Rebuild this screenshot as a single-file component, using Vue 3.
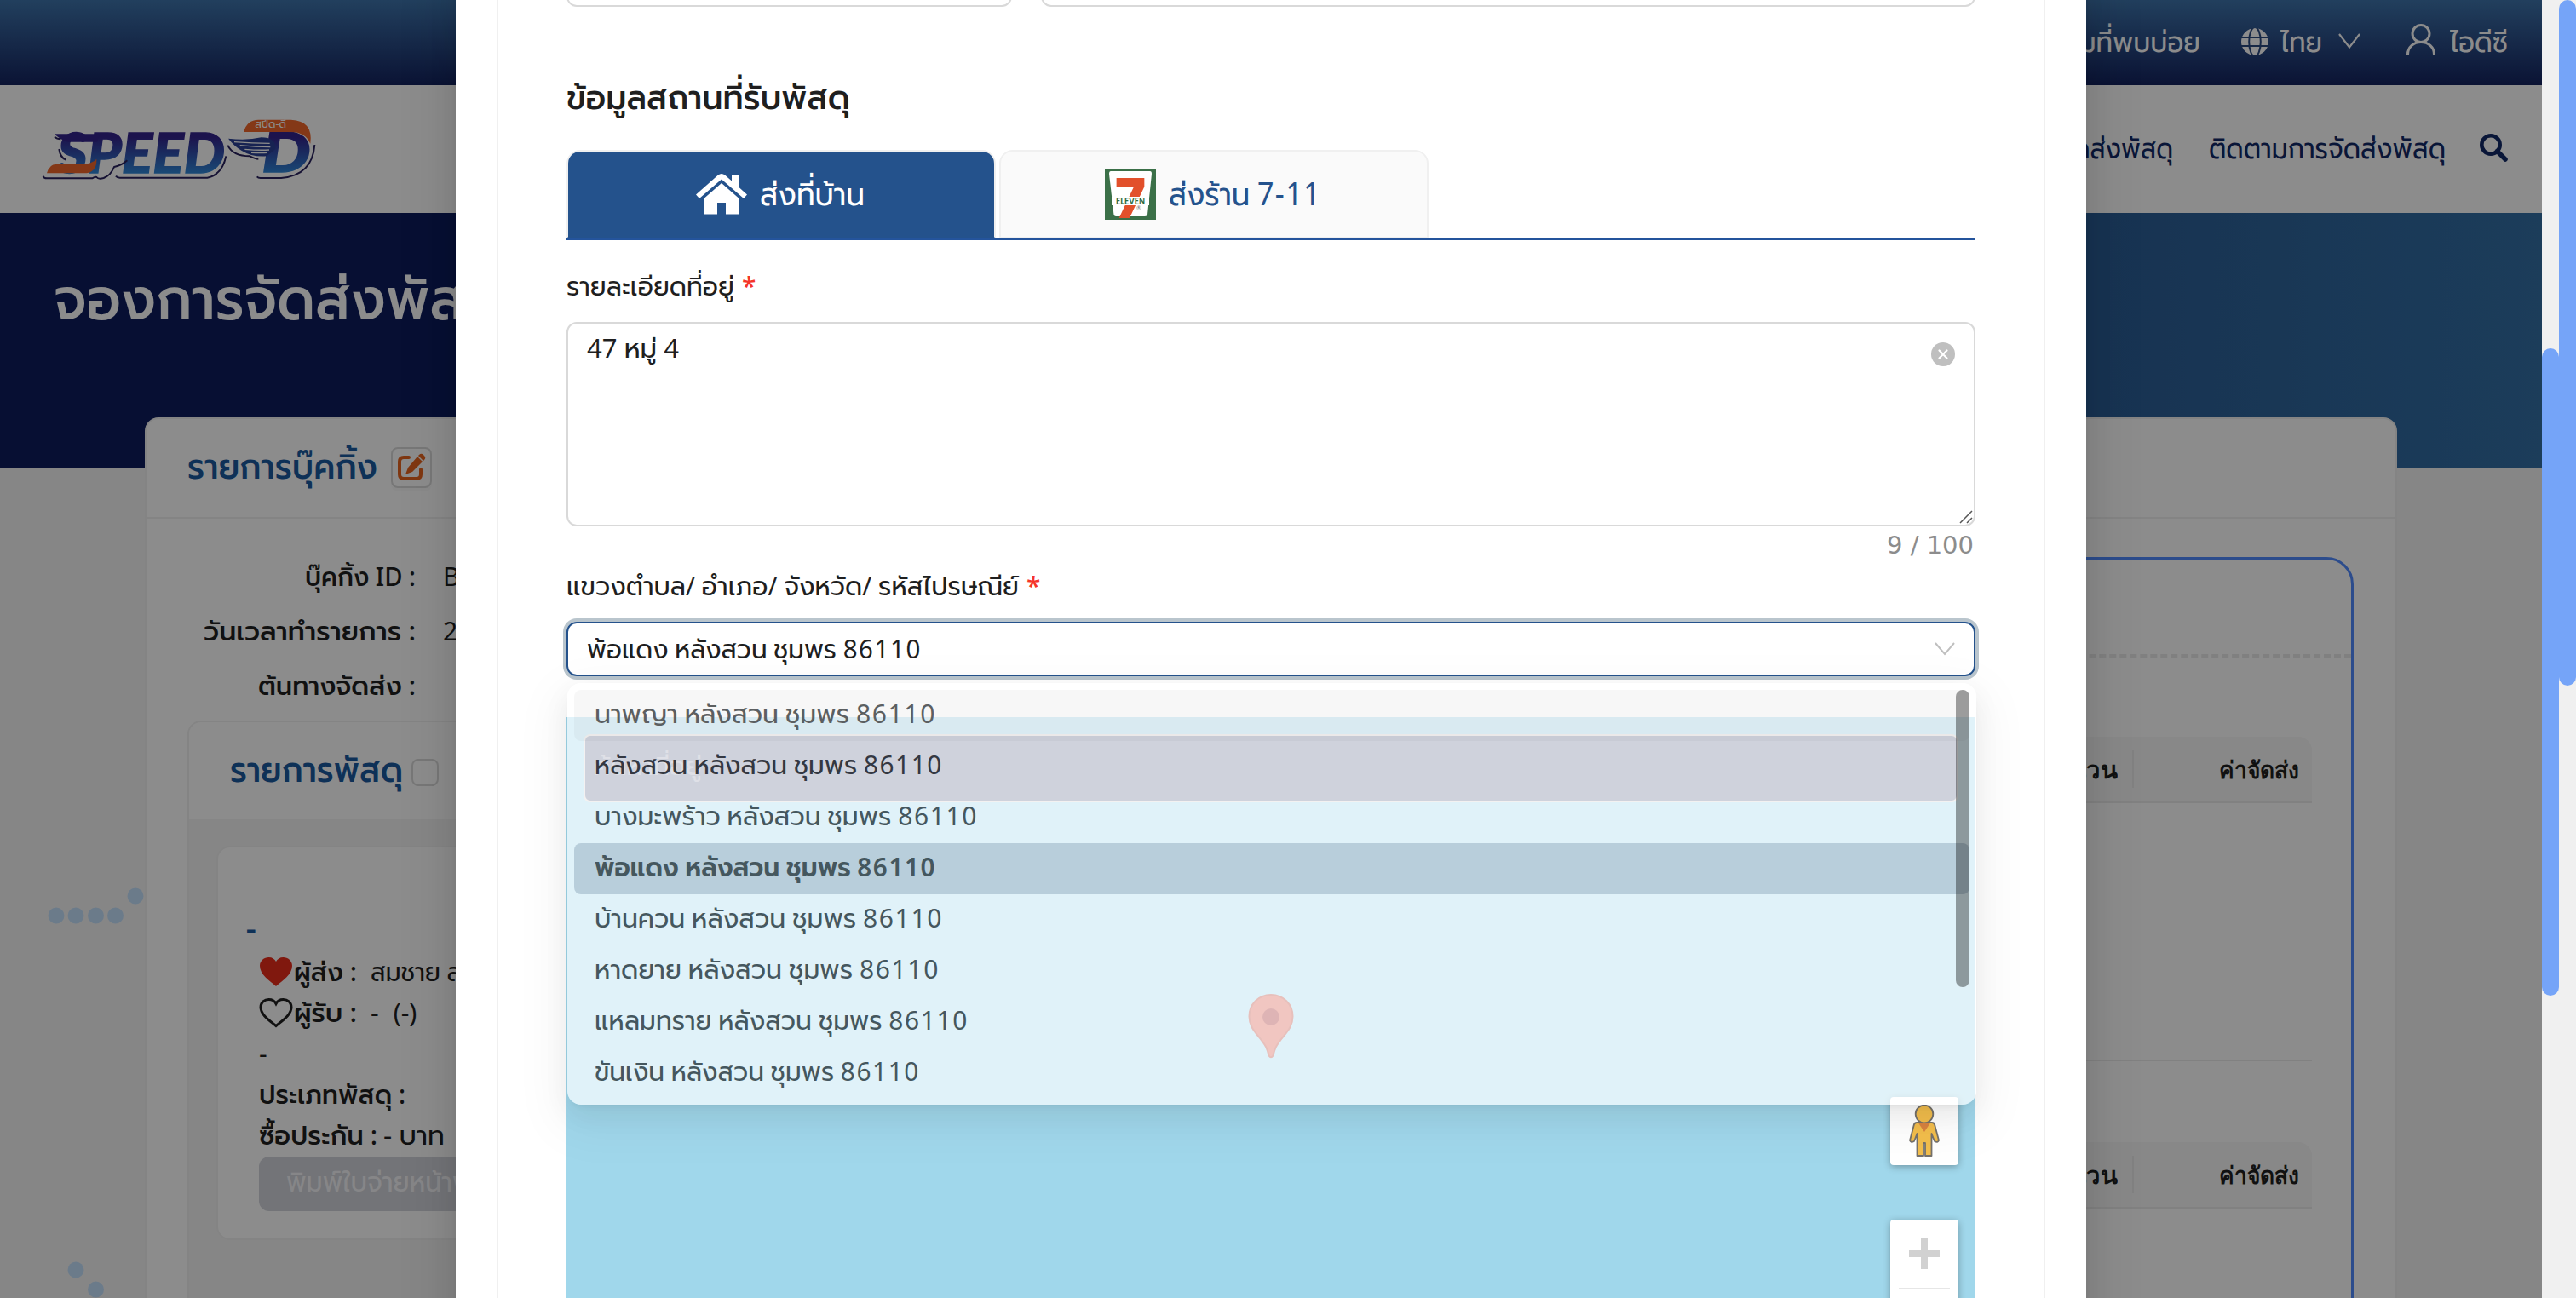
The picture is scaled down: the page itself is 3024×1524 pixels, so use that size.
<script setup>
const options = [
  { text: 'นาพญา หลังสวน ชุมพร', width: 400, state: 'hover' },
  { text: 'หลังสวน หลังสวน ชุมพร', width: 408, state: 'dark' },
  { text: 'บางมะพร้าว หลังสวน ชุมพร', width: 449, state: '' },
  { text: 'พ้อแดง หลังสวน ชุมพร', width: 400, state: 'selected' },
  { text: 'บ้านควน หลังสวน ชุมพร', width: 408, state: '' },
  { text: 'หาดยาย หลังสวน ชุมพร', width: 404, state: '' },
  { text: 'แหลมทราย หลังสวน ชุมพร', width: 438, state: '' },
  { text: 'ขันเงิน หลังสวน ชุมพร', width: 381, state: '' },
]
const booking = [
  { label: 'บุ๊คกิ้ง ID :', width: 130, value: 'BK2408' },
  { label: 'วันเวลาทำรายการ :', width: 249, value: '2024' },
  { label: 'ต้นทางจัดส่ง :', width: 185, value: '' },
]
const dots = [[66, 1075], [89, 1075], [112.5, 1075], [135.5, 1075], [159, 1052], [89, 1491], [112.5, 1514]]

// Keeps a label at its designed width whichever Thai font the browser picks.
const vFit = {
  mounted(el, { value }) {
    const natural = el.getBoundingClientRect().width
    if (!natural) return
    el.style.transform = `scaleX(${value / natural})`
    el.style.marginRight = `${value - natural}px`
  },
}
</script>

<template>
  <div class="screen">
    <div class="page">
      <div class="topbar">
        <span v-fit="208" class="fit">คำถามที่พบบ่อย</span>
        <svg class="globe" width="32" height="32" viewBox="0 0 32 32">
          <circle cx="16" cy="16" r="16" fill="#fff" />
          <g fill="none" stroke="#2b4a80" stroke-width="2"><ellipse cx="16" cy="16" rx="6.8" ry="17" /><path d="M0 11h32M0 21h32" /></g>
        </svg>
        <span v-fit="49" class="fit lang">ไทย</span>
        <svg class="caret" width="26" height="18" viewBox="0 0 26 18" fill="none" stroke="#fff" stroke-width="2.2"><path d="M1 1l12 15.500L25 1" /></svg>
        <svg class="user" width="34" height="36" viewBox="0 0 34 36" fill="none" stroke="#fff" stroke-width="3"><ellipse cx="17" cy="11.500" rx="10" ry="10" /><path d="M1.500 36C1.500 27 8.500 21.500 17 21.500S32.500 27 32.500 36" /></svg>
        <span v-fit="68" class="fit">ไอดีซี</span>
      </div>
      <div class="nav">
        <svg class="logo" width="360" height="110" viewBox="0 0 1080 330">
          <defs>
            <linearGradient id="ink" gradientUnits="userSpaceOnUse" x1="0" y1="110" x2="0" y2="250"><stop offset=".1" stop-color="#33248c" /><stop offset="1" stop-color="#2f86d6" /></linearGradient>
          </defs>
          <text x="112" y="248" class="speed" textLength="590" lengthAdjust="spacingAndGlyphs">SPEED</text>
          <path d="M75 250Q84 218 108 218H195Q235 218 250 200Q252 250 205 250z" fill="#f0662a" />
          <path d="M102 112H262L252 140H150Q120 132 102 112z" fill="#33248c" />
          <text x="832" y="247" class="speed bigd" textLength="172" lengthAdjust="spacingAndGlyphs">D</text>
          <path d="M768 105Q780 62 820 62H935Q1014 65 1003 146Q985 105 935 105z" fill="#f0662a" />
          <path d="M714 128Q780 136 830 124Q882 124 880 165L850 190Q800 195 760 170Q735 155 714 128z" fill="#2a4196" />
          <path d="M735 140Q800 145 860 145M755 152Q810 158 862 158M772 166Q820 170 858 168M795 178Q830 180 852 178" fill="none" stroke="#fff" stroke-width="4" />
          <path d="M62 260Q64 268 75 268H235Q245 262 250 264Q256 272 275 267Q300 258 312 228Q340 222 358 205M318 260q4 6 14 6H640Q692 256 706 190M815 262q5 6 15 5H900Q1010 258 1018 150M102 122q8 8 22 8M118 165Q122 195 142 203M712 152Q730 190 790 190q20 10 30 10" fill="none" stroke="#28215e" stroke-width="6" />
          <text x="808" y="91" class="logo-th" textLength="110" lengthAdjust="spacingAndGlyphs">สปีด-ดี</text>
        </svg>
        <span class="grow"></span>
        <span v-fit="234" class="fit">จองการจัดส่งพัสดุ</span>
        <span v-fit="278" class="fit track">ติดตามการจัดส่งพัสดุ</span>
        <svg class="search" width="33" height="33" viewBox="0 0 33 33" fill="none" stroke="#122866" stroke-width="4.600"><circle cx="13" cy="13" r="10.700" /><path d="M20.500 20.500L30 30" stroke-width="5.500" stroke-linecap="round" /></svg>
      </div>
      <div class="hero"><span v-fit="528" class="fit">จองการจัดส่งพัสดุ</span></div>

      <svg class="dots" width="170" height="1524"><circle v-for="(d, i) in dots" :key="i" :cx="d[0]" :cy="d[1]" r="9.500" fill="#c4e0fb" /></svg>

      <div class="card">
        <div class="card-head">
          <span v-fit="223" class="fit raise">รายการบุ๊คกิ้ง</span>
          <span class="edit">
            <svg width="34" height="34" viewBox="0 0 34 34"><path d="M14 5H8Q3 5 3 10V25Q3 30 8 30H23Q28 30 28 25V19" fill="none" stroke="#e8651f" stroke-width="4" stroke-linecap="round" /><path d="M24 4l6 6L18 22l-8 3 3-8zM26 2q2.500-2.500 5 0l1 1q2.500 2.500 0 5l-1 1-6-6z" fill="#e8651f" /></svg>
          </span>
        </div>
        <div class="card-body">
          <div class="left">
            <div v-for="row in booking" :key="row.label" class="meta">
              <b><span v-fit="row.width" class="fit">{{ row.label }}</span></b><span class="value">{{ row.value }}</span>
            </div>
            <div class="parcels">
              <div class="parcels-head"><span v-fit="203" class="fit raise">รายการพัสดุ</span><i class="box"></i></div>
              <div class="parcel">
                <div class="code">-</div>
                <div class="line">
                  <svg class="heart" width="40" height="36" viewBox="0 0 40 36"><path d="M20 35C12 28 1 21 1 11C1 5 6 1 11.500 1C15.500 1 18.500 3 20 6C21.500 3 24.500 1 28.500 1C34 1 39 5 39 11C39 21 28 28 20 35z" fill="#e92c1b" /></svg>
                  <b><span v-fit="74" class="fit">ผู้ส่ง :</span></b><span v-fit="190" class="fit gap">สมชาย สมหมาย</span>
                </div>
                <div class="line">
                  <svg class="heart" width="40" height="36" viewBox="0 0 40 36"><path d="M20 33.500C12 27 2 20.500 2 11.500C2 6 6.500 2.500 11.500 2.500C15.500 2.500 18.500 4.500 20 7.500C21.500 4.500 24.500 2.500 28.500 2.500C33.500 2.500 38 6 38 11.500C38 20.500 28 27 20 33.500z" fill="none" stroke="#1f1f1f" stroke-width="3" /></svg>
                  <b><span v-fit="74" class="fit">ผู้รับ :</span></b><span class="gap">-</span><span class="paren">(-)</span>
                </div>
                <div class="line">-</div>
                <div class="line"><b><span v-fit="172" class="fit">ประเภทพัสดุ :</span></b></div>
                <div class="line"><b><span v-fit="139" class="fit">ซื้อประกัน :</span></b><span v-fit="72" class="fit ins">- บาท</span></div>
                <div class="print"><span v-fit="258" class="fit">พิมพ์ใบจ่ายหน้าพัสดุ</span></div>
              </div>
            </div>
          </div>
          <div class="right">
            <div class="dash"></div>
            <div v-for="n in 2" :key="n" class="table">
              <div class="thead">
                <b class="qty"><span v-fit="90" class="fit">จำนวน</span></b>
                <b class="fee"><span v-fit="94" class="fit">ค่าจัดส่ง</span></b>
              </div>
              <div class="tbody"></div>
            </div>
          </div>
        </div>
      </div>
      <div class="mask"></div>
    </div>

    <div class="modal">
      <div class="form">
        <div class="inputs"><div class="input short"></div><div class="input"></div></div>
        <h2><span v-fit="333" class="fit">ข้อมูลสถานที่รับพัสดุ</span></h2>
        <div class="tabs">
          <div class="tab active">
            <svg width="60" height="48" viewBox="0 0 60 48" fill="#fff"><path d="M30 0Q32 0 34 1.500L42 8.500V1H50V15.500L60 24.500 56 29 30 6.500 4 29 0 24.500 26 1.500Q28 0 30 0z" /><path d="M30 11L50 28.500V47.500H35V34H25V47.500H10V28.500z" /></svg>
            <span v-fit="123" class="fit">ส่งที่บ้าน</span>
          </div>
          <div class="tab">
            <svg width="60" height="60" viewBox="0 0 60 60"><path fill="#3b7048" d="M0 0h60v60H0z" /><path d="M7 3H53Q55 3 55 6L50 54Q49.500 56 47 56H13Q11 56 10.500 54L5 6Q5 3 7 3z" fill="#fff" /><text x="12" y="57.500" class="seven" textLength="36" lengthAdjust="spacingAndGlyphs">7</text><path fill="#fff" d="M8 33H52V43H8z" /><text x="13" y="41.500" class="eleven" textLength="34" lengthAdjust="spacingAndGlyphs">ELEVEN</text><text x="37" y="49" class="reg">®</text></svg>
            <span v-fit="179" class="fit">ส่งร้าน <span class="num">7-11</span></span>
          </div>
        </div>
        <div class="label first"><span v-fit="197" class="fit">รายละเอียดที่อยู่</span><em>*</em></div>
        <div class="textarea">
          <span v-fit="108" class="fit">47 หมู่ 4</span>
          <svg class="clear" width="28" height="28" viewBox="0 0 28 28"><circle cx="14" cy="14" r="14" fill="#bfbfbf" /><path d="M9.500 9.500l9 9M18.500 9.500l-9 9" stroke="#fff" stroke-width="2.200" stroke-linecap="round" /></svg>
          <svg class="grip" width="16" height="16" viewBox="0 0 16 16" stroke="#555" stroke-width="1.500"><path d="M1 15L15 1M9 15l6-6" /></svg>
        </div>
        <div class="count">9 / 100</div>
        <div class="label second"><span v-fit="531" class="fit">แขวงตำบล/ อำเภอ/ จังหวัด/ รหัสไปรษณีย์</span><em>*</em></div>
        <div class="select">
          <span v-fit="393" class="fit">พ้อแดง หลังสวน ชุมพร <span class="num">86110</span></span>
          <svg width="24" height="16" viewBox="0 0 24 16" fill="none" stroke="#bfbfbf" stroke-width="2"><path d="M1 1l11 13L23 1" /></svg>
          <div class="dropdown">
            <div v-for="o in options" :key="o.text" class="option" :class="o.state"><span v-fit="o.width + 1" class="fit">{{ o.text }} <span class="num">86110</span></span></div>
            <div class="thumb"></div>
          </div>
        </div>
        <div class="map">
          <div class="find"><span v-fit="127" class="fit">ค้นหาที่อยู่</span></div>
          <svg class="pin" width="54" height="76" viewBox="0 0 54 76"><path d="M27 1C12.500 1 1.500 12 1.500 26.500C1.500 42 13 48 21 62C23.500 67 24 70 24.500 72.500Q27 76 29.500 72.500C30 70 30.500 67 33 62C41 48 52.500 42 52.500 26.500C52.500 12 41.500 1 27 1z" fill="#d2503f" stroke="#b53c30" stroke-width="2" /><circle cx="27" cy="27" r="10" fill="#98181b" /></svg>
          <div class="peg">
            <svg width="36" height="62" viewBox="0 0 36 62" fill="#f3be4c" stroke="#75716b" stroke-width="1.800" stroke-linejoin="round"><path d="M9 21H27Q29 21 30 23L35 42Q34 45 30 43L26.500 34V60H19V45H17V60H9.500V34L6 43Q2 45 1 42L6 23Q7 21 9 21z" /><circle cx="18" cy="11" r="10.300" /><path d="M11 21.500H25L18 32z" fill="#d98340" stroke="none" /></svg>
          </div>
          <div class="zoom"><svg width="36" height="36"><path d="M14 0h8v14h14v8H22v14h-8V22H0v-8h14z" fill="#d1d1d1" /></svg><i></i></div>
        </div>
      </div>
    </div>

    <div class="bars"><div class="bar inner"><i></i></div><div class="bar outer"><i></i></div></div>
  </div>
</template>

<style>
body { overflow: hidden; }
</style>
<style scoped>
* { box-sizing: border-box; }
.screen { position: relative; width: 3024px; height: 1524px; overflow: hidden; display: flex; font-family: "Noto Sans", Prompt, Kanit, "Noto Sans Thai", sans-serif; font-size: 30px; line-height: 44px; color: #1f1f1f; }
.fit { display: inline-block; white-space: nowrap; transform-origin: 0 50%; flex: none; }
.num { letter-spacing: 1.6px; }
.page { position: relative; width: 2984px; height: 1524px; background: #f5f5f5; overflow: hidden; }
.topbar { height: 100px; background: linear-gradient(#3e74ab, #14235f); display: flex; align-items: center; justify-content: flex-end; padding: 0 40px 2px 0; color: #fff; font-size: 34px; }
.topbar .fit { margin-top: -3px; }
.topbar .globe { margin-left: 48px; }
.topbar .lang { margin-left: 14px; }
.topbar .caret { margin-left: 19px; margin-top: -2px; }
.topbar .user { margin-left: 54px; margin-top: -6px; margin-right: 17px; }
.nav { height: 150px; background: #fff; display: flex; align-items: center; padding: 0 40px 0 30px; font-size: 34px; color: #122866; }
.nav .fit, .nav .search { margin-top: -4px; }
.speed { font: italic 900 192px Lato, sans-serif; fill: url(#ink); stroke: url(#ink); stroke-width: 4px; }
.logo-th { font-size: 36px; fill: #fff; }
.seven { font: 900 65px Inter, sans-serif; fill: #e2502b; }
.eleven { font: 900 11px Lato, sans-serif; fill: #2d6b41; }
.reg { font: 7px Lato, sans-serif; fill: #777; }
.grow { flex: 1; }
.track { margin-left: 42px; }
.search { margin-left: 40px; }
.hero { height: 300px; background: linear-gradient(90deg, #0d1d5d 18%, #336fa5); padding: 54px 0 0 63px; color: #fff; font-size: 68px; line-height: 90px; font-weight: 500; }
.dots { position: absolute; left: 0; top: 0; }
.card { width: 2644px; height: 1100px; margin: -60px 0 0 170px; position: relative; background: #fff; border: 2px solid #f0f0f0; border-radius: 16px; }
.card-head { height: 117px; border-bottom: 2px solid #f0f0f0; display: flex; align-items: center; padding-left: 48px; color: #1b599e; font-size: 42px; font-weight: 500; }
.raise { margin-top: -7px; }
.edit { width: 48px; height: 48px; margin: -1px 0 0 16px; border: 2px solid #d9d9d9; border-radius: 8px; display: flex; align-items: center; justify-content: center; box-shadow: 0 4px 0 rgba(0,0,0,.02); }
.card-body { display: flex; }
.left { width: 900px; padding: 36px 0 0 48px; }
.meta { display: flex; height: 64px; line-height: 64px; }
.meta b { width: 268px; text-align: right; font-weight: 500; }
.meta .value { margin-left: 32px; }
.parcels { margin-top: 9px; height: 800px; border: 2px solid #f0f0f0; border-radius: 16px; background: #f5f5f5; overflow: hidden; }
.parcels-head { height: 114px; background: #fff; display: flex; align-items: center; padding-left: 48px; color: #1b599e; font-size: 42px; font-weight: 500; }
.box { width: 32px; height: 32px; margin: 4px 0 0 10px; border: 2px solid #d9d9d9; border-radius: 8px; }
.parcel { margin: 31px 0 0 32px; height: 463px; border: 2px solid #f0f0f0; border-radius: 16px; background: #fff; padding: 73px 0 0 48px; }
.code { height: 44px; margin-left: -15px; color: #1b599e; font-size: 36px; font-weight: 700; }
.line { height: 48px; line-height: 48px; display: flex; align-items: center; white-space: pre; }
.line b { font-weight: 500; }
.heart { margin-right: 1px; flex: none; }
.gap { margin-left: 16px; }
.paren { margin-left: 17px; }
.ins { margin-left: 7px; }
.code + .line { margin-top: 5px; }
.print { height: 64px; width: 500px; margin-top: 1px; background: #d1d3da; border-radius: 12px; color: #f5f5f7; padding-left: 32px; line-height: 58px; font-size: 33px; }
.right { margin: 45px 49px 0 auto; width: 1500px; height: 1000px; border: 3px solid #508bff; border-radius: 32px; padding-top: 111px; }
.dash { border-top: 4px dashed #e9e9e9; margin-bottom: 93px; }
.table { margin-right: 46px; height: 476px; font-family: "Noto Sans", sans-serif; font-size: 28px; }
.thead { height: 78px; background: #f7f7f7; border-bottom: 2px solid #ececec; border-radius: 0 16px 0 0; display: flex; align-items: center; justify-content: flex-end; }
.qty { height: 44px; border-right: 2px solid #ececec; padding-right: 17px; }
.fee { width: 209px; text-align: right; padding-right: 15px; }
.tbody { height: 303px; border-bottom: 2px solid #ececec; }
.mask { position: absolute; inset: 0; background: rgba(0,0,0,.45); }
.modal { position: absolute; left: 535px; top: -40px; width: 1914px; height: 1604px; padding: 40px 48px 0; background: #fff; box-shadow: 0 12px 32px rgba(0,0,0,.08), 0 6px 12px -8px rgba(0,0,0,.12), 0 18px 56px 16px rgba(0,0,0,.08); }
.form { width: 1818px; height: 1564px; border: solid #f0f0f0; border-width: 0 2px; padding: 0 80px; }
.inputs { display: flex; gap: 34px; height: 8px; align-items: flex-end; }
.input { flex: 1; height: 64px; border: 2px solid #d9d9d9; border-radius: 12px; }
.input.short { flex: none; width: 523px; }
h2 { margin: 75px 0 0; font-size: 40px; font-weight: 500; line-height: 60px; }
.tabs { margin-top: 33px; height: 106px; border-bottom: 2px solid #24549c; display: flex; gap: 4px; font-size: 38px; color: #24528c; }
.tab { width: 504px; height: 104px; border: 2px solid #f0f0f0; border-radius: 16px 16px 0 0; background: #fafafa; display: flex; align-items: center; justify-content: center; gap: 15px; padding-right: 2px; }
.tab > .fit { margin-top: -4px; }
.tab.active { background: #24528c; color: #fff; border-bottom-color: #24528c; }
.label { display: flex; }
.label em { font-style: normal; color: #f5352a; margin-left: 9px; font-weight: 500; }
.first { margin-top: 32px; }
.second { margin-top: 4px; }
.textarea { position: relative; margin-top: 20px; height: 240px; border: 2px solid #d9d9d9; border-radius: 12px; padding: 7px 22px; }
.clear { position: absolute; right: 22px; top: 22px; }
.grip { position: absolute; right: 1px; bottom: 1px; }
.count { text-align: right; font-family: "DejaVu Sans", sans-serif; font-size: 29px; color: #8c8c8c; padding-right: 2px; }
.select { position: relative; margin-top: 20px; height: 64px; border: 2px solid #24528c; border-radius: 12px; box-shadow: 0 0 0 4px #b9c5cd; padding: 0 22px; display: flex; align-items: center; justify-content: space-between; }
.dropdown { position: absolute; z-index: 2; left: -1px; top: 70px; width: 1654px; height: 495px; border-radius: 16px; background: rgba(255,255,255,.68); padding: 8px; box-shadow: 0 12px 32px rgba(0,0,0,.06), 0 6px 12px -8px rgba(0,0,0,.12), 0 18px 56px 16px rgba(0,0,0,.04); }
.option { height: 60px; border-radius: 8px; padding: 0 24px; line-height: 56px; color: #45575e; }
.option.hover { background: rgba(0,0,0,.03); color: #5c5f61; }
.option.dark { color: #343842; }
.option.selected { background: #b8cedb; font-weight: 600; }
.thumb { position: absolute; right: 8px; top: 8px; width: 16px; height: 349px; border-radius: 8px; background: rgba(0,0,0,.37); }
.map { position: relative; margin-top: 48px; height: 682px; background: #a0d7eb; overflow: hidden; }
.find { position: absolute; left: 20px; top: 20px; width: 1614px; height: 80px; border: 2px solid #d8d4d2; border-radius: 8px; background: #6a7592; color: #9ba0b4; line-height: 70px; padding-left: 10px; }
.pin { position: absolute; left: 800px; top: 325px; }
.peg, .zoom { position: absolute; right: 20px; width: 80px; background: #fff; border-radius: 4px; box-shadow: 0 2px 8px rgba(0,0,0,.3); display: flex; }
.peg { top: 446px; height: 80px; align-items: center; justify-content: center; }
.zoom { top: 590px; height: 160px; flex-direction: column; align-items: center; padding-top: 22px; gap: 22px; }
.zoom i { width: 60px; height: 2px; background: #e6e6e6; }
.bars { width: 40px; display: flex; background: #f0f0f0; }
.bar { width: 20px; }
.bar i { display: block; background: #75a4f8; border-radius: 10px; }
.outer i { height: 805px; }
.inner { padding-top: 409px; }
.inner i { height: 760px; }
</style>
